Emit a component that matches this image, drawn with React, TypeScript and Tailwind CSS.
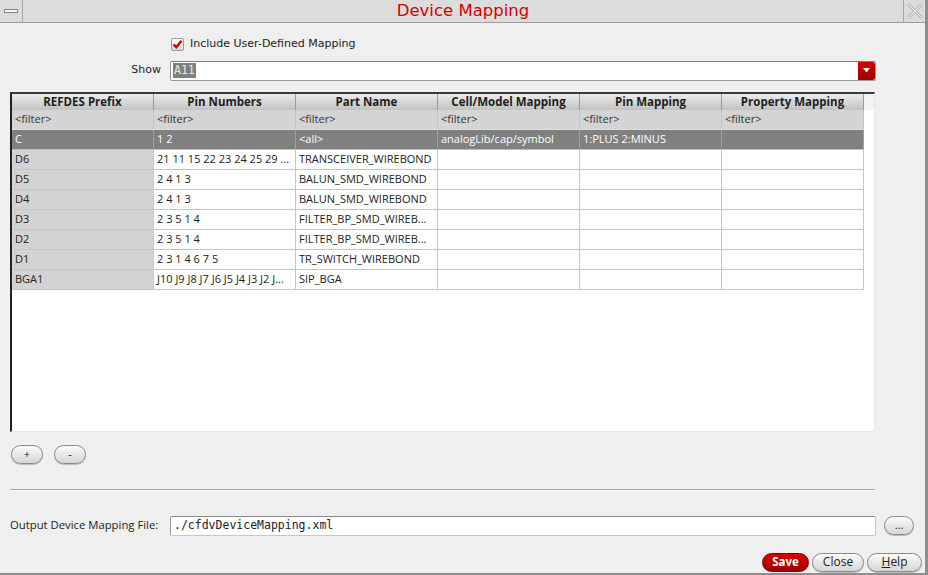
import React from "react";

const ui = { fontFamily: '"Open Sans", "Noto Sans", sans-serif' };
const dv = { fontFamily: '"DejaVu Sans", sans-serif' };
const mono = { fontFamily: '"DejaVu Sans Mono", monospace' };

const columns = [
  "REFDES Prefix",
  "Pin Numbers",
  "Part Name",
  "Cell/Model Mapping",
  "Pin Mapping",
  "Property Mapping",
];

const rows: string[][] = [
  ["C", "1 2", "<all>", "analogLib/cap/symbol", "1:PLUS 2:MINUS", ""],
  ["D6", "21 11 15 22 23 24 25 29 ...", "TRANSCEIVER_WIREBOND", "", "", ""],
  ["D5", "2 4 1 3", "BALUN_SMD_WIREBOND", "", "", ""],
  ["D4", "2 4 1 3", "BALUN_SMD_WIREBOND", "", "", ""],
  ["D3", "2 3 5 1 4", "FILTER_BP_SMD_WIREB...", "", "", ""],
  ["D2", "2 3 5 1 4", "FILTER_BP_SMD_WIREB...", "", "", ""],
  ["D1", "2 3 1 4 6 7 5", "TR_SWITCH_WIREBOND", "", "", ""],
  ["BGA1", "J10 J9 J8 J7 J6 J5 J4 J3 J2 J...", "SIP_BGA", "", "", ""],
];

function PillButton({ label, className }: { label: React.ReactNode; className?: string }) {
  return (
    <button
      className={
        "flex items-center justify-center rounded-full border border-[#8a8a8a] bg-gradient-to-b from-[#fbfbfb] to-[#d6d6d6] text-[11px] text-[#222] shadow-[0_1px_0_#bdbdbd] " +
        (className ?? "")
      }
      style={ui}
    >
      {label}
    </button>
  );
}

export default function App() {
  return (
    <div className="flex h-[575px] w-[928px] flex-col overflow-hidden border-r-[3px] border-b-2 border-[#8e8e8e] bg-[#efefef] text-[#222]" style={ui}>
      {/* title bar */}
      <div className="flex h-[23px] shrink-0 items-stretch border-b border-[#9c9c9c] bg-[#dcdcdc]">
        <div className="flex w-[23px] items-center justify-center border-r border-[#a8a8a8]">
          <div className="h-[4px] w-[14px] border border-[#888] bg-[#f4f4f4]" />
        </div>
        <div className="flex flex-1 items-center justify-center text-[16.5px] text-[#d40000]" style={dv}>
          Device Mapping
        </div>
        <div className="flex w-[22px] items-center justify-center border-l border-[#a8a8a8]">
          <svg width="18" height="18" viewBox="0 0 18 18">
            <path d="M2 2 L16 16 M16 2 L2 16" stroke="#b8b8b8" strokeWidth="3" />
            <path d="M2 2 L16 16 M16 2 L2 16" stroke="#f6f6f6" strokeWidth="1" />
          </svg>
        </div>
      </div>

      {/* include checkbox */}
      <div className="mt-[13px] flex items-center pl-[171px]">
        <div className="flex h-[13px] w-[13px] items-center justify-center rounded-[2px] border border-[#9a9a9a] bg-gradient-to-b from-[#fafafa] to-[#dadada]">
          <svg width="11" height="11" viewBox="0 0 11 11">
            <path d="M1.5 5.5 L4.3 8.3 L9.5 1.8" fill="none" stroke="#cc0000" strokeWidth="2.4" />
          </svg>
        </div>
        <span className="ml-[6px] text-[11px]" style={dv}>Include User-Defined Mapping</span>
      </div>

      {/* show combo */}
      <div className="mt-[8px] flex items-center">
        <span className="w-[161px] text-right text-[11px]" style={dv}>Show</span>
        <div className="ml-[9px] flex h-[20px] w-[706px] items-center rounded-[2px] border border-[#9a9a9a] border-t-[#7a7a7a] bg-white pl-[2px]">
          <span className="bg-[#808080] px-[1px] text-[11.5px] leading-[15px] text-[#e8e8e8]" style={mono}>A11</span>
          <div className="ml-auto flex h-[18px] w-[17px] items-center justify-center rounded-r-[2px] bg-gradient-to-b from-[#d20000] to-[#9c0000]">
            <svg width="7" height="5" viewBox="0 0 7 5">
              <path d="M0 0 H7 L3.5 4.5 Z" fill="#fff" />
            </svg>
          </div>
        </div>
      </div>

      {/* table */}
      <div className="ml-[10px] mt-[11px] flex h-[340px] w-[865px] flex-col border-l-2 border-t-2 border-r border-b border-l-[#222] border-t-[#3a3a3a] border-r-[#e6e6e6] border-b-[#e6e6e6] bg-white">
        <div className="flex h-[16px] shrink-0 bg-[#f3f3f3]">
          {columns.map((c) => (
            <div
              key={c}
              className="flex w-[142px] shrink-0 items-center justify-center border-r border-[#9a9a9a] bg-gradient-to-b from-[#ececec] to-[#c2c2c2] text-[11.5px] font-bold leading-none text-[#1e1e1e]"
            >
              {c}
            </div>
          ))}
        </div>
        <div className="flex h-[20px] w-[852px] shrink-0 border-b border-[#e0e0e0] bg-[#d4d4d4]">
          {columns.map((c) => (
            <div key={c} className="flex w-[142px] shrink-0 items-center border-r border-[#c4c4c4] pl-[3px] text-[11px] text-[#333]">
              &lt;filter&gt;
            </div>
          ))}
        </div>
        {rows.map((r, i) => {
          const selected = i === 0;
          return (
            <div
              key={r[0]}
              className={
                "flex h-[20px] w-[852px] shrink-0 border-b " +
                (selected ? "border-[#bdbdbd] bg-[#808080] text-white" : "border-[#c6c6c6] text-[#222]")
              }
            >
              {r.map((cell, j) => (
                <div
                  key={j}
                  className={
                    "flex w-[142px] shrink-0 items-center overflow-hidden whitespace-nowrap border-r pl-[3px] text-[11px] " +
                    (selected ? "border-[#a0a0a0]" : "border-[#c6c6c6]") +
                    (!selected && j === 0 ? " bg-[#d3d3d3]" : "")
                  }
                >
                  {cell}
                </div>
              ))}
            </div>
          );
        })}
      </div>

      {/* add/remove */}
      <div className="ml-[11px] mt-[13px] flex gap-[11px]">
        <PillButton label="+" className="h-[19px] w-[32px]" />
        <PillButton label="-" className="h-[19px] w-[32px]" />
      </div>

      <div className="ml-[10px] mt-[25px] h-[2px] w-[865px] border-t border-b border-t-[#a6a6a6] border-b-[#fafafa]" />

      {/* output file */}
      <div className="mt-[25px] flex items-center">
        <span className="ml-[10px] w-[160px] text-[11.3px]">Output Device Mapping File:</span>
        <div className="flex h-[20px] w-[706px] items-center rounded-[2px] border border-[#c8c8c8] border-t-[#8a8a8a] border-l-[#9a9a9a] bg-white pl-[3px]">
          <span className="text-[11.5px]" style={mono}>./cfdvDeviceMapping.xml</span>
        </div>
        <PillButton label="..." className="ml-[8px] h-[19px] w-[30px]" />
      </div>

      {/* footer buttons */}
      <div className="mt-[17px] flex justify-end gap-[3px] pr-[3px]">
        <button
          className="flex h-[19px] w-[47px] items-center justify-center rounded-full border border-[#7a0000] bg-gradient-to-b from-[#d80000] to-[#a00000] text-[11.5px] font-bold text-white"
          style={ui}
        >
          Save
        </button>
        <PillButton label={<span className="text-[12px]">Close</span>} className="h-[19px] w-[52px]" />
        <PillButton
          label={
            <span className="text-[12px]">
              <span className="underline">H</span>elp
            </span>
          }
          className="h-[19px] w-[55px]"
        />
      </div>
    </div>
  );
}
